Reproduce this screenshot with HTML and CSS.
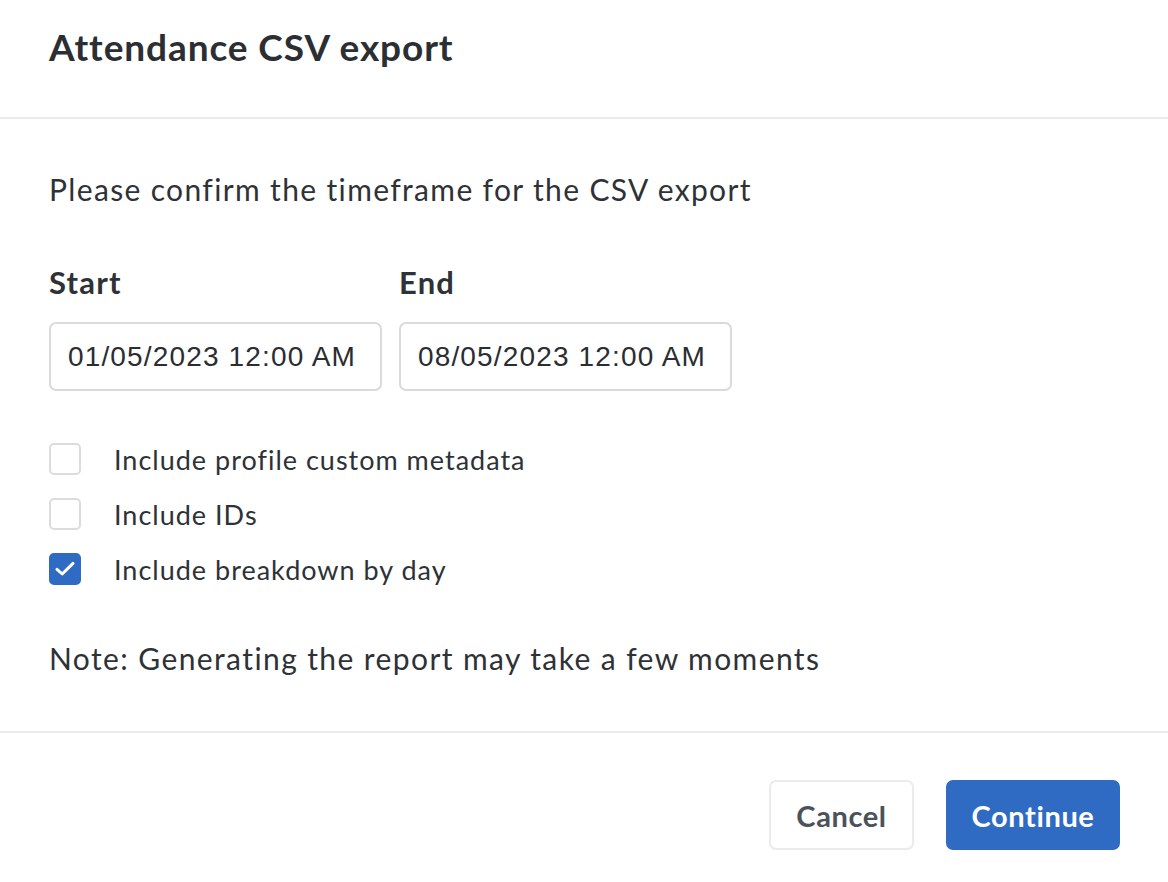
FILE: index.html
```html
<!DOCTYPE html>
<html lang="en">
<head>
<meta charset="utf-8">
<title>Attendance CSV export</title>
<link rel="stylesheet" href="styles.css">
</head>
<body>
<div class="modal">
  <header class="modal-header">
    <h1 class="title">Attendance CSV export</h1>
  </header>
  <section class="modal-body">
    <p class="intro">Please confirm the timeframe for the CSV export</p>
    <div class="range">
      <div class="field">
        <label class="field-label">Start</label>
        <div class="input">01/05/2023 12:00 AM</div>
      </div>
      <div class="field">
        <label class="field-label">End</label>
        <div class="input">08/05/2023 12:00 AM</div>
      </div>
    </div>
    <ul class="options">
      <li class="option"><span class="box"></span><span class="option-text">Include profile custom metadata</span></li>
      <li class="option"><span class="box"></span><span class="option-text">Include IDs</span></li>
      <li class="option"><span class="box checked"><svg class="check" viewBox="0 0 22 22" width="22" height="22"><path d="M3 11.3 L8.2 16 L19 5.4" fill="none" stroke="#fff" stroke-width="3" stroke-linecap="round" stroke-linejoin="round"/></svg></span><span class="option-text">Include breakdown by day</span></li>
    </ul>
    <p class="note">Note: Generating the report may take a few moments</p>
  </section>
  <footer class="modal-footer">
    <button class="btn btn-secondary">Cancel</button>
    <button class="btn btn-primary">Continue</button>
  </footer>
</div>
</body>
</html>
```

FILE: styles.css
```css
html, body {
  margin: 0;
  padding: 0;
  background: #ffffff;
}
body {
  font-family: "Lato", "Noto Sans", sans-serif;
  color: #2e3237;
}
.modal {
  width: 1168px;
  height: 882px;
  display: flex;
  flex-direction: column;
}
.modal-header {
  height: 119px;
  border-bottom: 2px solid #ebebeb;
  padding: 0 49px;
  box-sizing: border-box;
  display: flex;
  align-items: flex-start;
}
.title {
  margin: 24px 0 0;
  font-size: 37px;
  line-height: 46px;
  font-weight: 700;
  letter-spacing: 0.9px;
  color: #2b2f33;
}
.modal-body {
  padding: 0 49px;
  height: 614px;
  box-sizing: border-box;
  border-bottom: 2px solid #ebebeb;
}
.intro {
  margin: 51px 0 0;
  font-size: 30px;
  line-height: 38px;
  letter-spacing: 1.35px;
}
.range {
  display: flex;
  gap: 17px;
  margin-top: 55px;
}
.field {
  display: flex;
  flex-direction: column;
}
.field-label {
  font-size: 31px;
  line-height: 38px;
  font-weight: 700;
  letter-spacing: 1.2px;
  margin-bottom: 21px;
}
.input {
  width: 333px;
  height: 69px;
  box-sizing: border-box;
  border: 2px solid #dadada;
  border-radius: 7px;
  padding: 0 0 0 17px;
  display: flex;
  align-items: center;
  font-family: "Liberation Sans", Arial, sans-serif;
  font-size: 28px;
  letter-spacing: 1.15px;
  color: #2a2d31;
}
.options {
  list-style: none;
  margin: 52px 0 0;
  padding: 0;
  display: flex;
  flex-direction: column;
  gap: 23px;
}
.option {
  display: flex;
  align-items: center;
  height: 32px;
}
.box {
  flex: 0 0 32px;
  width: 32px;
  height: 32px;
  box-sizing: border-box;
  border: 2px solid #dcdcdc;
  border-radius: 5px;
  margin-right: 33px;
  display: flex;
  align-items: center;
  justify-content: center;
}
.box.checked {
  background: #2f6bc3;
  border-color: #2f6bc3;
}
.check {
  flex: 0 0 22px;
  width: 22px;
  height: 22px;
  display: block;
}
.option-text {
  font-size: 27px;
  letter-spacing: 1px;
}
.note {
  margin: 54px 0 0;
  font-size: 30px;
  line-height: 38px;
  letter-spacing: 1.4px;
}
.modal-footer {
  display: flex;
  justify-content: flex-end;
  gap: 32px;
  padding: 47px 48px 0 0;
}
.btn {
  height: 70px;
  border-radius: 7px;
  font-family: "Lato", "Noto Sans", sans-serif;
  font-size: 29px;
  font-weight: 700;
  letter-spacing: 0.6px;
  cursor: pointer;
}
.btn-secondary {
  width: 145px;
  background: #ffffff;
  border: 2px solid #ebebeb;
  color: #4b5259;
}
.btn-primary {
  width: 174px;
  background: #2f6bc3;
  border: none;
  color: #ffffff;
}
```
